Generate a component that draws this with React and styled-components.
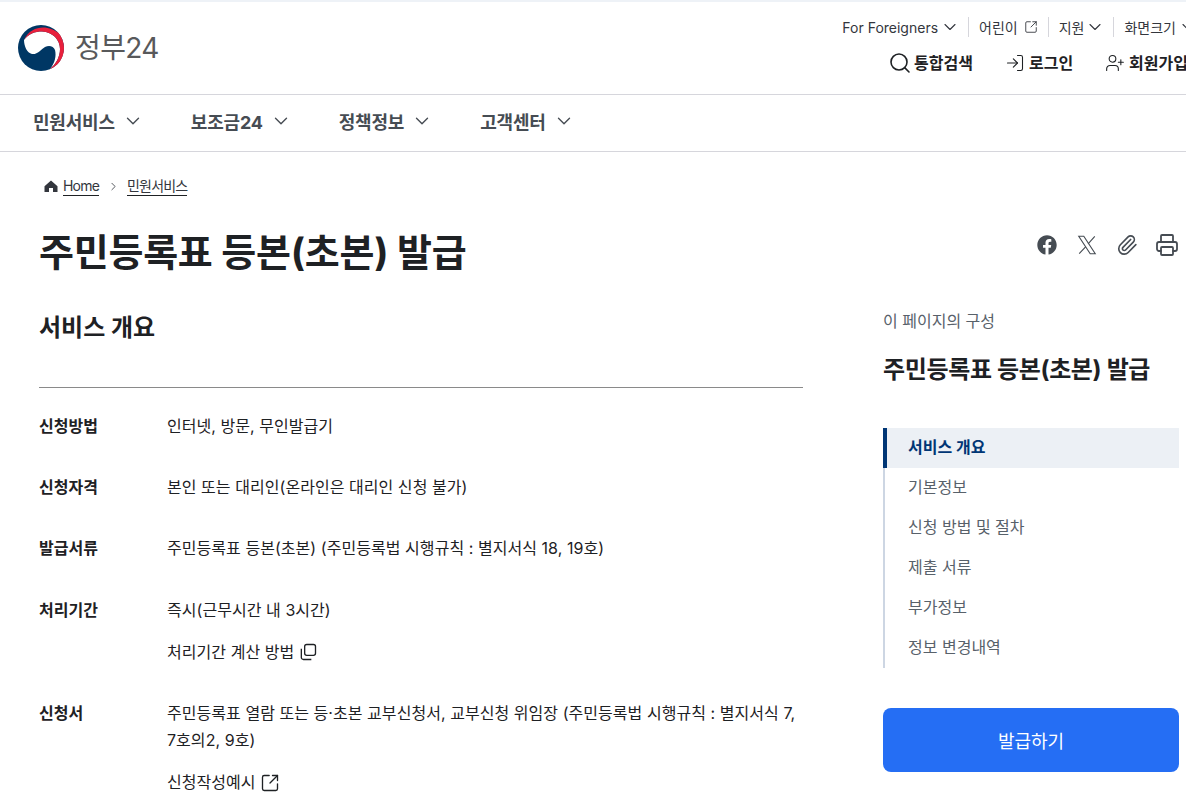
import styled, { createGlobalStyle } from 'styled-components';
import { ChevronDown, ChevronRight, Search, LogIn, UserPlus, SquareArrowOutUpRight, Paperclip, Printer } from 'lucide-react';
import { FaFacebook } from 'react-icons/fa';

const GlobalStyle = createGlobalStyle`
  html, body {
    margin: 0;
    padding: 0;
    background: #fff;
    overflow-x: hidden;
  }
  body {
    font-family: Inter, "Noto Sans CJK KR", sans-serif;
    color: #1e2124;
  }
  svg {
    flex: none;
  }
`;

const Page = styled.div`
  width: 1186px;
  overflow: hidden;
  border-top: 2px solid #eef2f7;
`;

const Header = styled.header`
  width: 1212px;
  height: 93px;
  box-sizing: border-box;
  display: flex;
  justify-content: space-between;
  padding: 0 16px 0 18px;
  border-bottom: 1px solid #d6d6dc;
`;

const Logo = styled.a`
  display: flex;
  align-items: center;
  gap: 11px;
  height: 92px;
`;

const LogoText = styled.span`
  font-size: 28px;
  font-weight: 400;
  letter-spacing: -0.6px;
  color: #58595b;
  line-height: 1;
`;

const HeaderRight = styled.div`
  display: flex;
  flex-direction: column;
  align-items: flex-end;
`;

const UtilRow = styled.ul`
  list-style: none;
  margin: 16px 0 0;
  padding: 0;
  display: flex;
  align-items: center;
  height: 18px;
`;

const UtilItem = styled.li`
  display: flex;
  align-items: center;
  gap: ${p => p.$gap || '4px'};
  font-size: 14px;
  color: #33363d;
  padding: 0 ${p => (p.$last ? '0' : '10px')} 0 10px;
  border-left: ${p => (p.$first ? 'none' : '1px solid #d6d6dc')};
`;

const UtilChevron = styled(ChevronDown)`
  margin: 0 -2px;
`;

const ActionRow = styled.div`
  display: flex;
  align-items: center;
  gap: 32px;
  margin-top: 15px;
  margin-right: 8px;
`;

const ActionLink = styled.a`
  display: flex;
  align-items: center;
  gap: ${p => p.$gap || '4px'};
  font-size: 16px;
  font-weight: 700;
  color: #1e2124;
  line-height: 24px;
`;

const Nav = styled.nav`
  height: 57px;
  box-sizing: border-box;
  display: flex;
  align-items: center;
  gap: 47px;
  padding: 0 0 4px 33px;
  border-bottom: 1px solid #d6d6dc;
`;

const NavItem = styled.a`
  display: flex;
  align-items: center;
  gap: 7px;
  font-size: 18px;
  font-weight: 700;
  letter-spacing: -0.2px;
  color: #464c53;
`;

const Main = styled.main`
  padding: 0 7px 0 39px;
`;

const Breadcrumb = styled.div`
  display: flex;
  align-items: center;
  height: 20px;
  margin: 24px 0 0 5px;
  font-size: 14px;
  letter-spacing: -0.8px;
  color: #33363d;
`;

const CrumbLink = styled.a`
  margin-left: ${p => (p.$home ? '5px' : '0')};
  border-bottom: 1px solid #1e2124;
  line-height: 18px;
`;

const CrumbArrow = styled(ChevronRight)`
  margin: 0 7px 0 8px;
`;

const TitleRow = styled.div`
  display: flex;
  justify-content: space-between;
  align-items: center;
  margin-top: 31px;
  height: 50px;
`;

const Title = styled.h1`
  margin: 0;
  font-size: 38px;
  font-weight: 700;
  letter-spacing: -0.25px;
  color: #1e2124;
  line-height: 50px;
`;

const ShareIcons = styled.div`
  display: flex;
  align-items: center;
  gap: 20px;
  margin-right: 2px;
  margin-bottom: 14px;
  color: #464c53;
`;

const IconBox = styled.span`
  display: flex;
  width: 20px;
  height: 20px;
  align-items: center;
  justify-content: center;
`;

const Columns = styled.div`
  display: grid;
  grid-template-columns: 764px 296px;
  column-gap: 80px;
`;

const SectionTitle = styled.h2`
  margin: 35px 0 0;
  font-size: 24px;
  font-weight: 700;
  line-height: 32px;
  padding-bottom: 43px;
  border-bottom: 1px solid #8a8a8a;
`;

const InfoList = styled.dl`
  margin: 25px 0 0;
`;

const InfoRow = styled.div`
  display: grid;
  grid-template-columns: 128px 1fr;
  margin-bottom: 34px;
`;

const InfoLabel = styled.dt`
  font-size: 16px;
  font-weight: 700;
  line-height: 27.2px;
  color: #1e2124;
`;

const InfoValue = styled.dd`
  margin: 0;
  font-size: 16px;
  letter-spacing: 0.05px;
  line-height: 27.2px;
  color: #1e2124;
`;

const InfoLink = styled.a`
  display: flex;
  align-items: center;
  gap: 4px;
  margin-top: 15px;
`;

const Aside = styled.aside`
  padding-top: 32px;
`;

const AsideLabel = styled.p`
  margin: 0;
  font-size: 16px;
  line-height: 24px;
  color: #58616a;
`;

const AsideTitle = styled.h3`
  margin: 21px 0 0;
  font-size: 24px;
  font-weight: 700;
  letter-spacing: -0.35px;
  line-height: 32px;
`;

const TocList = styled.ul`
  list-style: none;
  margin: 42px 0 0;
  padding: 0;
  border-left: 2px solid #cdd6e3;
`;

const TocItem = styled.li`
  height: 40px;
  display: flex;
  align-items: center;
  box-sizing: border-box;
  padding: 0 0 4px ${p => (p.$active ? '21px' : '23px')};
  margin-left: ${p => (p.$active ? '-2px' : '0')};
  font-size: 16px;
  font-weight: ${p => (p.$active ? 700 : 400)};
  color: ${p => (p.$active ? '#003675' : '#58616a')};
  background: ${p => (p.$active ? '#ecf0f5' : 'transparent')};
  border-left: ${p => (p.$active ? '4px solid #003675' : 'none')};
`;

const IssueButton = styled.button`
  display: block;
  width: 100%;
  height: 64px;
  margin-top: 40px;
  border: none;
  border-radius: 8px;
  background: #256ef4;
  color: #fff;
  font-family: inherit;
  font-size: 18px;
`;

const TaegeukLogo = () => (
  <svg width="46" height="46" viewBox="0 0 46 46" aria-hidden="true">
    <circle cx="23" cy="23" r="23" fill="#003764" />
    <path d="M6 15C10 9 17 6.5 24 6.5C35 7 42 15 42 24C42 32 38 39 32 44C37 38 38.5 31 37 25C35.5 21 31 20 27 22C23 24.5 19 30 14 29C9 28 6 21 6 15Z" fill="#fff" />
    <path d="M6 15C10 6 18 2.5 25 2.5C31 2.5 37 5 40.5 8C44 12 46 18 46 23C46 33 40 41 32 44C38 39 42 32 42 24C42 15 35 7 24 6.5C17 6.5 10 9 6 15Z" fill="#e8203c" />
  </svg>
);

const HomeIcon = () => (
  <svg width="14" height="14" viewBox="0 0 14 14" aria-hidden="true">
    <path d="M7 1.5L13.5 7.2V13H9V9H5V13H.5V7.2Z" fill="#33363d" />
  </svg>
);

const XIcon = () => (
  <svg width="22" height="22" viewBox="0 0 24 24" fill="none" stroke="currentColor" strokeWidth="1.2" aria-hidden="true">
    <path d="M3 2.5H8.5L21 21.5H15.5Z" />
    <path d="M20.5 2.5L13.2 10.8M10.7 13.7L3.5 21.5" />
  </svg>
);

const CopyIcon = () => (
  <svg width="20" height="20" viewBox="0 0 24 24" fill="none" stroke="currentColor" strokeWidth="1.6" aria-hidden="true">
    <rect x="8" y="3" width="13" height="13" rx="2.5" />
    <path d="M4 8V18.5A2.5 2.5 0 0 0 6.5 21H16" />
  </svg>
);

const infoRows = [
  { label: '신청방법', text: '인터넷, 방문, 무인발급기' },
  { label: '신청자격', text: '본인 또는 대리인(온라인은 대리인 신청 불가)' },
  { label: '발급서류', text: '주민등록표 등본(초본) (주민등록법 시행규칙 : 별지서식 18, 19호)' },
];

const navItems = ['민원서비스', '보조금24', '정책정보', '고객센터'];

const tocItems = ['서비스 개요', '기본정보', '신청 방법 및 절차', '제출 서류', '부가정보', '정보 변경내역'];

export default function App() {
  return (
    <>
      <GlobalStyle />
      <Page>
        <Header>
          <Logo>
            <TaegeukLogo />
            <LogoText>정부24</LogoText>
          </Logo>
          <HeaderRight>
            <UtilRow>
              <UtilItem $first>For Foreigners <UtilChevron size={20} strokeWidth={1.3} /></UtilItem>
              <UtilItem $gap="6px">어린이 <SquareArrowOutUpRight size={14} strokeWidth={1.5} /></UtilItem>
              <UtilItem $gap="3px">지원 <UtilChevron size={20} strokeWidth={1.3} /></UtilItem>
              <UtilItem $last>화면크기 <UtilChevron size={20} strokeWidth={1.3} /></UtilItem>
            </UtilRow>
            <ActionRow>
              <ActionLink $gap="2px"><Search size={24} strokeWidth={1.6} />통합검색</ActionLink>
              <ActionLink><LogIn size={20} strokeWidth={1.3} />로그인</ActionLink>
              <ActionLink><UserPlus size={20} strokeWidth={1.3} />회원가입</ActionLink>
            </ActionRow>
          </HeaderRight>
        </Header>
        <Nav>
          {navItems.map(item => (
            <NavItem key={item}>{item} <ChevronDown size={22} strokeWidth={1.5} /></NavItem>
          ))}
        </Nav>
        <Main>
          <Breadcrumb>
            <HomeIcon />
            <CrumbLink $home>Home</CrumbLink>
            <CrumbArrow size={13} strokeWidth={1.5} />
            <CrumbLink>민원서비스</CrumbLink>
          </Breadcrumb>
          <TitleRow>
            <Title>주민등록표 등본(초본) 발급</Title>
            <ShareIcons>
              <IconBox><FaFacebook size={20} /></IconBox>
              <IconBox><XIcon /></IconBox>
              <IconBox><Paperclip size={22} strokeWidth={1.8} /></IconBox>
              <IconBox><Printer size={24} strokeWidth={1.8} /></IconBox>
            </ShareIcons>
          </TitleRow>
          <Columns>
            <div>
              <SectionTitle>서비스 개요</SectionTitle>
              <InfoList>
                {infoRows.map(row => (
                  <InfoRow key={row.label}>
                    <InfoLabel>{row.label}</InfoLabel>
                    <InfoValue>{row.text}</InfoValue>
                  </InfoRow>
                ))}
                <InfoRow>
                  <InfoLabel>처리기간</InfoLabel>
                  <InfoValue>
                    즉시(근무시간 내 3시간)
                    <InfoLink>처리기간 계산 방법 <CopyIcon /></InfoLink>
                  </InfoValue>
                </InfoRow>
                <InfoRow>
                  <InfoLabel>신청서</InfoLabel>
                  <InfoValue>
                    주민등록표 열람 또는 등·초본 교부신청서, 교부신청 위임장 (주민등록법 시행규칙 : 별지서식 7, 7호의2, 9호)
                    <InfoLink>신청작성예시 <SquareArrowOutUpRight size={20} strokeWidth={1.6} /></InfoLink>
                  </InfoValue>
                </InfoRow>
              </InfoList>
            </div>
            <Aside>
              <AsideLabel>이 페이지의 구성</AsideLabel>
              <AsideTitle>주민등록표 등본(초본) 발급</AsideTitle>
              <TocList>
                {tocItems.map((item, i) => (
                  <TocItem key={item} $active={i === 0}>{item}</TocItem>
                ))}
              </TocList>
              <IssueButton>발급하기</IssueButton>
            </Aside>
          </Columns>
        </Main>
      </Page>
    </>
  );
}
